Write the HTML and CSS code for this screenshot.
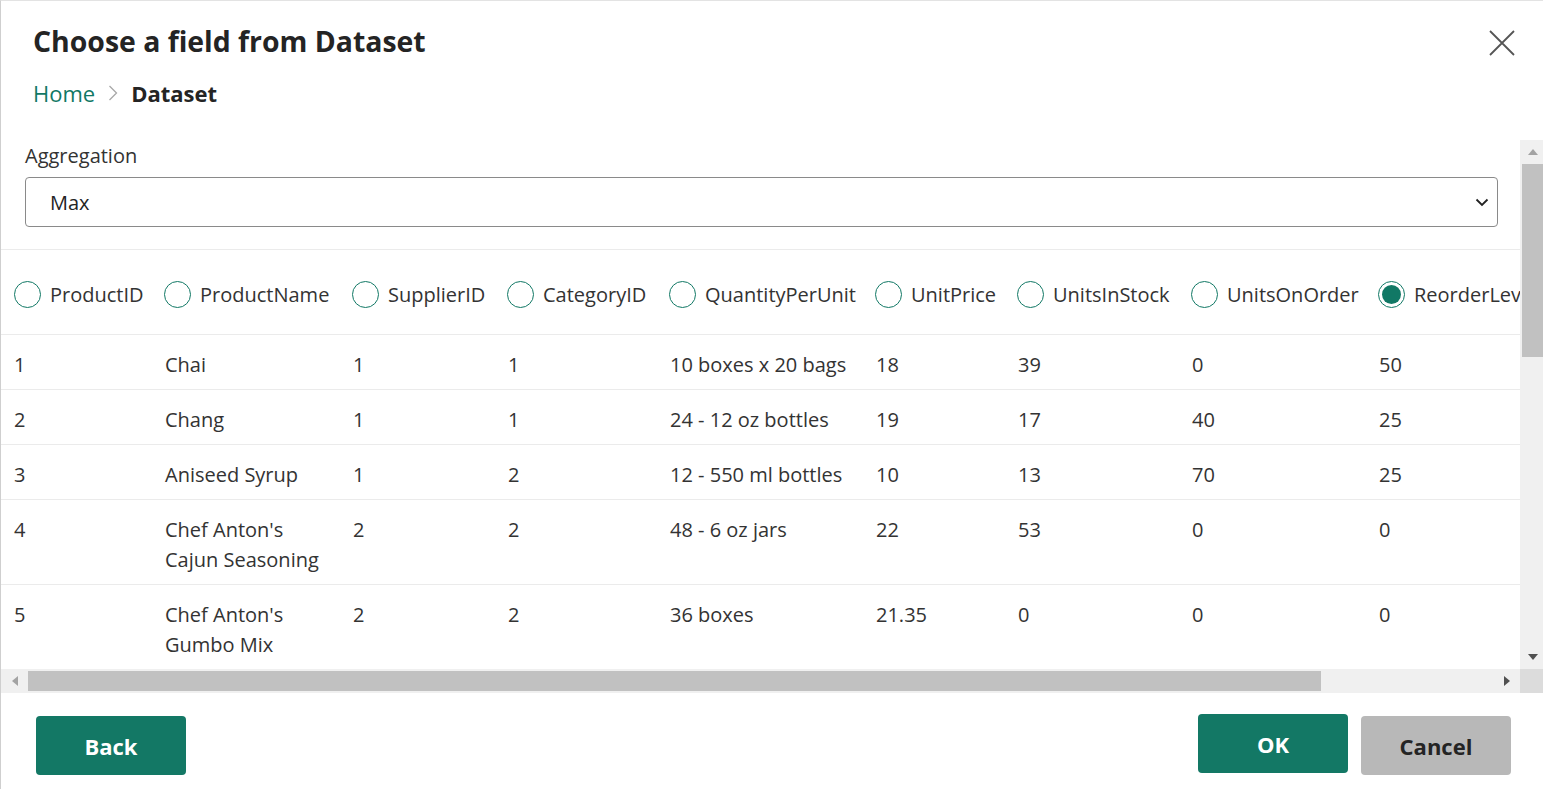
FILE: index.html
```html
<!DOCTYPE html>
<html lang="en">
<head>
<meta charset="utf-8">
<title>Choose a field from Dataset</title>
<link rel="stylesheet" href="styles.css">
</head>
<body>
<div class="dialog">
  <header class="dlg-head">
    <h1 class="title">Choose a field from Dataset</h1>
    <button class="close" aria-label="Close">
      <svg width="26" height="26" viewBox="0 0 26 26"><path d="M1 1 L25 25 M25 1 L1 25" stroke="#555" stroke-width="1.8" fill="none"/></svg>
    </button>
  </header>
  <nav class="crumbs">
    <a class="crumb-link">Home</a>
    <svg class="crumb-sep" width="10" height="16" viewBox="0 0 10 16"><path d="M1.5 1 L8.5 8 L1.5 15" stroke="#a8a8a8" stroke-width="1.3" fill="none"/></svg>
    <span class="crumb-current">Dataset</span>
  </nav>
  <div class="scroller">
    <div class="viewport">
      <div class="agg">
        <div class="agg-label">Aggregation</div>
        <div class="select">
          <span>Max</span>
          <svg width="14" height="9" viewBox="0 0 14 9"><path d="M1.5 1.5 L7 7 L12.5 1.5" stroke="#222" stroke-width="1.8" fill="none"/></svg>
        </div>
      </div>
      <table class="grid">
        <colgroup>
          <col style="width:150px"><col style="width:188px"><col style="width:155px"><col style="width:162px"><col style="width:206px"><col style="width:142px"><col style="width:174px"><col style="width:187px"><col style="width:193px"><col style="width:200px">
        </colgroup>
        <thead>
          <tr>
            <th><span class="radio"></span>ProductID</th>
            <th><span class="radio"></span>ProductName</th>
            <th><span class="radio"></span>SupplierID</th>
            <th><span class="radio"></span>CategoryID</th>
            <th><span class="radio"></span>QuantityPerUnit</th>
            <th><span class="radio"></span>UnitPrice</th>
            <th><span class="radio"></span>UnitsInStock</th>
            <th><span class="radio"></span>UnitsOnOrder</th>
            <th><span class="radio checked"></span>ReorderLevel</th>
            <th><span class="radio"></span>Discontinued</th>
          </tr>
        </thead>
        <tbody>
          <tr><td>1</td><td>Chai</td><td>1</td><td>1</td><td>10 boxes x 20 bags</td><td>18</td><td>39</td><td>0</td><td>50</td><td>false</td></tr>
          <tr><td>2</td><td>Chang</td><td>1</td><td>1</td><td>24 - 12 oz bottles</td><td>19</td><td>17</td><td>40</td><td>25</td><td>false</td></tr>
          <tr><td>3</td><td>Aniseed Syrup</td><td>1</td><td>2</td><td>12 - 550 ml bottles</td><td>10</td><td>13</td><td>70</td><td>25</td><td>false</td></tr>
          <tr><td>4</td><td>Chef Anton's Cajun Seasoning</td><td>2</td><td>2</td><td>48 - 6 oz jars</td><td>22</td><td>53</td><td>0</td><td>0</td><td>false</td></tr>
          <tr><td>5</td><td>Chef Anton's Gumbo Mix</td><td>2</td><td>2</td><td>36 boxes</td><td>21.35</td><td>0</td><td>0</td><td>0</td><td>true</td></tr>
        </tbody>
      </table>
    </div>
    <div class="vbar">
      <div class="sb-btn"><svg width="10" height="6" viewBox="0 0 10 6"><path d="M0 6 L5 0 L10 6 Z" fill="#a3a3a3"/></svg></div>
      <div class="vthumb"></div>
      <div class="vtrack"></div>
      <div class="sb-btn"><svg width="10" height="6" viewBox="0 0 10 6"><path d="M0 0 L5 6 L10 0 Z" fill="#505050"/></svg></div>
    </div>
    <div class="hbar">
      <div class="sb-hbtn"><svg width="6" height="10" viewBox="0 0 6 10"><path d="M6 0 L0 5 L6 10 Z" fill="#a3a3a3"/></svg></div>
      <div class="hthumb"></div>
      <div class="htrack"></div>
      <div class="sb-hbtn"><svg width="6" height="10" viewBox="0 0 6 10"><path d="M0 0 L6 5 L0 10 Z" fill="#505050"/></svg></div>
    </div>
    <div class="corner"></div>
  </div>
  <footer class="dlg-foot">
    <button class="btn primary back">Back</button>
    <div class="foot-right">
      <button class="btn primary ok">OK</button>
      <button class="btn secondary">Cancel</button>
    </div>
  </footer>
</div>
</body>
</html>
```
FILE: styles.css
```css
* { box-sizing: border-box; }
html, body { margin: 0; padding: 0; }
body {
  font-family: "Open Sans", "Noto Sans", "Liberation Sans", sans-serif;
  color: #242424;
  background: #fff;
}
.dialog {
  width: 1543px;
  height: 789px;
  display: flex;
  flex-direction: column;
  border-top: 1px solid #e3e3e3;
  border-left: 1px solid #cfcfcf;
  overflow: hidden;
}
.dlg-head {
  display: flex;
  justify-content: space-between;
  align-items: flex-start;
  padding: 20px 28px 0 32px;
  height: 70px;
}
.title {
  margin: 0;
  font-size: 28.4px;
  font-weight: 700;
  line-height: 40px;
  color: #242424;
}
.close {
  border: 0;
  background: none;
  padding: 0;
  margin-top: 9px;
  width: 26px;
  height: 26px;
}
.crumbs {
  display: flex;
  align-items: center;
  gap: 13px;
  padding-left: 32px;
  height: 44px;
  font-size: 22px;
  line-height: 30px;
}
.crumb-link { color: #117865; }
.crumb-current { font-weight: 700; color: #242424; }
.scroller {
  margin-top: 25px;
  height: 553px;
  display: grid;
  grid-template-columns: 1fr 23px;
  grid-template-rows: 1fr 24px;
}
.viewport {
  overflow: hidden;
  min-width: 0;
}
.agg {
  width: 1519px;
  padding: 2px 22px 22px 24px;
}
.agg-label {
  font-size: 20px;
  line-height: 28px;
  color: #333;
  margin-bottom: 7px;
}
.select {
  height: 50px;
  border: 1px solid #8a8a8a;
  border-radius: 4px;
  display: flex;
  align-items: center;
  justify-content: space-between;
  padding: 0 8px 0 24px;
  font-size: 20px;
  color: #242424;
}
.grid {
  border-collapse: collapse;
  table-layout: fixed;
  width: 1757px;
  font-size: 20px;
  color: #333;
}
.grid thead tr { border-top: 1px solid #ebebeb; border-bottom: 1px solid #ebebeb; }
.grid tbody tr { border-bottom: 1px solid #ebebeb; }
.grid th {
  text-align: left;
  font-weight: 400;
  white-space: nowrap;
  padding: 30px 10px 24px 13px;
  line-height: 30px;
  height: 85px;
  vertical-align: top;
}
.radio {
  display: inline-block;
  width: 27px;
  height: 27px;
  border: 1.5px solid #117865;
  border-radius: 50%;
  vertical-align: middle;
  margin: -4px 9px 0 0;
  position: relative;
}
.radio.checked::after {
  content: "";
  position: absolute;
  left: 2.5px;
  top: 2.5px;
  width: 19px;
  height: 19px;
  border-radius: 50%;
  background: #117865;
}
.grid td {
  padding: 15px 10px 9px 14px;
  line-height: 30px;
  vertical-align: top;
}
.grid td:first-child { padding-left: 13px; }
.vbar {
  background: #f0f0f0;
  display: flex;
  flex-direction: column;
  padding-left: 2px;
}
.sb-btn {
  height: 24px;
  display: flex;
  align-items: center;
  justify-content: center;
}
.vthumb { height: 193px; background: #c1c1c1; }
.vtrack { flex: 1; }
.hbar {
  background: #f0f0f0;
  display: flex;
  align-items: center;
}
.sb-hbtn {
  width: 27px;
  height: 24px;
  display: flex;
  align-items: center;
  justify-content: center;
}
.hthumb { width: 1293px; height: 20px; background: #c1c1c1; }
.htrack { flex: 1; }
.corner { background: #dcdcdc; }
.dlg-foot {
  flex: 1;
  display: flex;
  justify-content: space-between;
  align-items: flex-start;
  padding: 23px 32px 0 35px;
}
.foot-right { display: flex; gap: 13px; align-items: flex-start; }
.btn {
  width: 150px;
  height: 59px;
  border: 0;
  border-radius: 4px;
  font-family: inherit;
  font-size: 22px;
  font-weight: 700;
  cursor: pointer;
}
.primary { background: #137865; color: #fff; }
.secondary { background: #b8b8b8; color: #242424; }
.ok { margin-top: -2px; }
```
